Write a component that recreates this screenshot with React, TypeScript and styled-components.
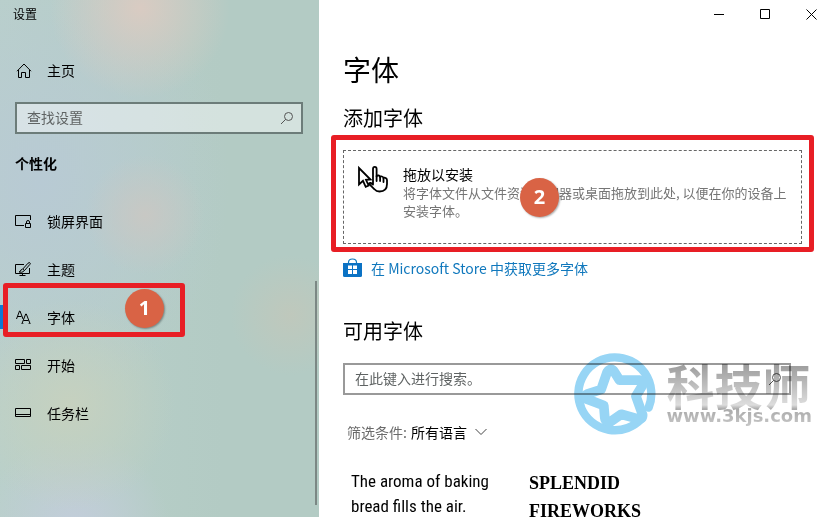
import React from "react";
import styled, { createGlobalStyle } from "styled-components";

const GlobalStyle = createGlobalStyle`
  *, *::before, *::after { box-sizing: border-box; }
  body {
    margin: 0;
    background: #fff;
    color: #000;
    font: 14px/20px "Noto Sans CJK SC", sans-serif;
  }
  h1, h2, p, ul { margin: 0; padding: 0; font-weight: 400; }
  button, input, select { font: inherit; color: inherit; }
`;

const Window = styled.div`
  display: flex;
  height: 100vh;
  overflow: hidden;
`;

const Sidebar = styled.aside`
  position: relative;
  flex: 0 0 319px;
  background:
    radial-gradient(circle at 140px 8px, #d9cbc2 0, #d9cbc200 90px),
    radial-gradient(circle at 145px 215px, #c8c8c4 0, #c8c8c400 60px),
    radial-gradient(circle at 70px 405px, #c6d1bf 0, #c6d1bf00 105px),
    radial-gradient(circle at 290px 315px, #bfc8bc 0, #bfc8bc00 60px),
    radial-gradient(circle at 75px 530px, #c3cddb 0, #c3cddb00 95px),
    radial-gradient(ellipse at 40px 180px, #b8cad4 0, #b8cad400 190px),
    linear-gradient(90deg, #b9d0ca, #b3cbc4 70%);
`;

const AppTitle = styled.div`
  padding: 4px 13px 5px;
  font-size: 12px;
`;

const NavItem = styled.a`
  position: relative;
  display: flex;
  align-items: center;
  gap: 15px;
  height: 48px;
  padding-left: 15px;
  color: #000;
  text-decoration: none;
`;

const HomeItem = styled(NavItem)`
  margin-top: 17px;
`;

const Indicator = styled.span`
  position: absolute;
  left: 0;
  top: 12px;
  width: 4px;
  height: 24px;
  background: #0f78d4;
`;

const SearchBox = styled.label<{ $tinted?: boolean }>`
  display: flex;
  align-items: center;
  height: 32px;
  margin: ${(p) => (p.$tinted ? "8px 16px 0 15px" : "0 11px 0 0")};
  padding: 0 7px 0 10px;
  border: 2px solid ${(p) => (p.$tinted ? "#6c7c79" : "#999")};
  background: ${(p) => (p.$tinted ? "#ffffff70" : "#fff")};
`;

const SearchInput = styled.input`
  flex: 1;
  min-width: 0;
  padding: 0 0 2px;
  border: 0;
  outline: 0;
  background: transparent;
  &::placeholder { color: #5f6363; opacity: 1; }
`;

const SectionLabel = styled.h2`
  padding: 19px 15px 24px;
  font-size: 14px;
  font-weight: 700;
`;

const NavList = styled.ul`
  list-style: none;
`;

const ScrollThumb = styled.div`
  position: absolute;
  right: 2px;
  top: 281px;
  bottom: 12px;
  width: 2px;
  background: #7b8784;
`;

const Frame = styled.span<{ $inset: string }>`
  position: absolute;
  inset: ${(p) => p.$inset};
  border: 5px solid #e81e25;
  border-radius: 3px;
  pointer-events: none;
`;

const Badge = styled.span<{ $left: string; $top: string }>`
  position: absolute;
  left: ${(p) => p.$left};
  top: ${(p) => p.$top};
  width: 39px;
  height: 39px;
  border-radius: 50%;
  background: #d96345;
  color: #fff;
  font: 700 20px/38px "Open Sans", sans-serif;
  text-align: center;
  box-shadow: 1px 1px 2px #0005;
`;

const Main = styled.main`
  display: flex;
  flex: 1;
  flex-direction: column;
  min-width: 0;
  overflow: hidden;
`;

const Caption = styled.div`
  display: flex;
  flex-shrink: 0;
  justify-content: flex-end;
  margin-right: -4px;
`;

const CaptionButton = styled.button`
  display: grid;
  place-items: center;
  width: 46px;
  height: 28px;
  padding: 0;
  border: 0;
  background: none;
`;

const Content = styled.div`
  padding: 21px 28px 0 24px;
`;

const PageTitle = styled.h1`
  font-size: 28px;
  line-height: 40px;
`;

const Heading = styled.h2`
  font-size: 20px;
  line-height: 28px;
`;

const AddHeading = styled(Heading)`
  margin: 15px 0 18px;
`;

const DropZone = styled.section`
  position: relative;
  display: flex;
  gap: 14px;
  min-height: 94px;
  padding: 14px 12px 22px 13px;
  border: 1px dashed #666;
`;

const DropText = styled.div`
  flex: 1;
  font-size: 13px;
  line-height: 18px;
  color: #757575;
`;

const DropTitle = styled.p`
  margin-bottom: 1px;
  font-size: 14px;
  color: #000;
`;

const StoreLink = styled.a`
  display: flex;
  align-items: center;
  gap: 9px;
  margin: 14px 0 39px;
  color: #1078bd;
  text-decoration: none;
`;

const FontSearch = styled.div`
  position: relative;
  margin-top: 18px;
`;

const Watermark = styled.div`
  position: absolute;
  right: -10px;
  top: -10px;
  display: flex;
  gap: 10px;
  mix-blend-mode: multiply;
  pointer-events: none;
`;

const Brand = styled.div`
  display: flex;
  flex-direction: column;
  padding-top: 9px;
  background: linear-gradient(#a0a0a0 14px, #ddd 52px, #aaa 56px, #ccc 76px);
  background-clip: text;
  color: transparent;
`;

const BrandName = styled.span`
  font-size: 48px;
  font-weight: 700;
  line-height: 44px;
`;

const BrandUrl = styled.span`
  font: 700 18px/20px "DejaVu Sans", sans-serif;
`;

const Filter = styled.label`
  display: flex;
  align-items: center;
  gap: 4px;
  margin: 27px 4px 0;
  color: #6b6b6b;
`;

const FilterSelect = styled.select`
  appearance: none;
  margin-right: 4px;
  padding: 0;
  border: 0;
  background: none;
  color: #000;
`;

const Samples = styled.div`
  display: grid;
  grid-template-columns: 178px 1fr;
  margin: 27px 8px 0;
`;

const NarrowSample = styled.p`
  font: 17px/25px "Roboto Condensed", "Liberation Sans Narrow", Roboto, sans-serif;
`;

const SerifSample = styled.p`
  font: 700 18px/28px "Liberation Serif", serif;
`;

const Icon = ({ children, w = 17, h = 17 }: { children: React.ReactNode; w?: number; h?: number }) => (
  <svg width={w} height={h} viewBox={`0 0 ${w} ${h}`} fill="none" stroke="#000" aria-hidden="true">
    {children}
  </svg>
);

const HomeIcon = () => (
  <Icon>
    <path d="M2 9.2 9 2l7 7.2M3.5 8v7.5h3v-5h4v5h4V8" />
  </Icon>
);
const LockScreenIcon = () => (
  <Icon>
    <path d="M9 12.5H.5v-10h15V7M10.500 10.500h5v4h-5zM11.500 10.500V9q0-1.500 1.500-1.500T14.500 9v1.500" />
  </Icon>
);
const ThemeIcon = () => (
  <Icon>
    <path d="M9 3.500H.5v9h14V7M4.500 14.500h6M7.500 12.500v2" />
    <path d="M14.500 1.500q1.500.500.300 2L9.500 9.500 7.800 8l5.200-5.800zM7.500 8.300q-2 .2-2.200 2L4 11q3 .8 4.500-.5.800-.700.700-1.300" />
  </Icon>
);
const FontsIcon = () => (
  <Icon>
    <path d="M1.500 10 4.500 2h.5l3 8M2.500 7.500h4M7 14.500 10.700 5h.6L15 14.500M8.500 11.500h5" />
    <path d="M6.500 14.500h2M13.500 14.500h2" strokeWidth=".6" />
  </Icon>
);
const StartIcon = () => (
  <Icon>
    <path d="M.5 2.500h9v4h-9zM11.500 2.500h4v4h-4zM.5 8.500h4v4h-4zM6.500 8.500h9v4h-9z" />
  </Icon>
);
const TaskbarIcon = () => (
  <Icon>
    <path d="M.5 3.500h15v8H.5zM.5 9.500h15" />
  </Icon>
);
const SearchIcon = () => (
  <svg width="14" height="14" viewBox="0 0 14 14" fill="none" stroke="#555" aria-hidden="true">
    <circle cx="8.500" cy="5.500" r="4" />
    <path d="M5.700 8.300 1 13" />
  </svg>
);

const CursorIcon = () => (
  <svg width="32" height="30" viewBox="0 0 32 30" fill="none" stroke="#000" strokeWidth="1.800" aria-hidden="true">
    <path d="M2 3v16.500l4-3.700 2.700 6 2.900-1.300-2.600-5.700 4.500-.3z" />
    <path
      strokeLinejoin="round"
      strokeLinecap="round"
      fill="#fff"
      d="M16 16V4q0-2.200 1.800-2.200T19.600 4v7.500q.4-1.300 2-1 1.300.3 1.500 1.500.5-1 2-.5 1.300.4 1.400 1.600.5-.8 1.800-.3 1.600.5 1.700 2.200v4q0 7.500-7.500 7.500-3.200 0-5-2.200L11.800 18.600q1.700-1.700 4.200 1z"
    />
    <path d="M19.600 11v5M23.100 12v4M26.500 13v4" strokeLinecap="round" />
  </svg>
);

const StoreIcon = () => (
  <svg width="19" height="20" viewBox="0 0 19 20" aria-hidden="true">
    <path d="M5.500 6V4.500q0-3.500 4-3.500t4 3.500V6" fill="none" stroke="#1078bd" strokeWidth="1.200" />
    <path d="M0 5h19v12.500q0 1.500-1.500 1.500h-16Q0 19 0 17.500z" fill="#0b72c4" />
    <path d="M5 7.500h4V11H5zM10 7.500h4V11h-4zM5 12h4v4H5zM10 12h4v4h-4z" fill="#fff" />
  </svg>
);

const StarLogo = () => (
  <svg width="82" height="82" viewBox="-1 -1 245 245" fill="none" stroke="#97d5f5" aria-hidden="true">
    <path
      d="M222 162A109 109 0 1 0 200.700 195.300"
      strokeWidth="25"
      strokeLinecap="round"
    />
    <path
      d="M98 56Q110 40 120 56L135 80 194 80Q212 82 203 97L184 128 204 184Q204 198 190 196L140 182 110 203Q93 208 91 192L88 156 36 136Q24 128 38 122L80 108Z"
      strokeWidth="29"
      strokeLinejoin="round"
    />
  </svg>
);

const navItems = [
  { label: "锁屏界面", icon: <LockScreenIcon /> },
  { label: "主题", icon: <ThemeIcon /> },
  { label: "字体", icon: <FontsIcon />, current: true },
  { label: "开始", icon: <StartIcon /> },
  { label: "任务栏", icon: <TaskbarIcon /> },
];

export default function App() {
  return (
    <>
      <GlobalStyle />
      <Window>
        <Sidebar>
          <AppTitle>设置</AppTitle>
          <HomeItem href="#home">
            <HomeIcon />
            主页
          </HomeItem>
          <SearchBox $tinted>
            <SearchInput type="text" placeholder="查找设置" aria-label="查找设置" />
            <SearchIcon />
          </SearchBox>
          <SectionLabel>个性化</SectionLabel>
          <NavList>
            {navItems.map((item) => (
              <li key={item.label}>
                <NavItem href={`#${item.label}`} aria-current={item.current ? "page" : undefined}>
                  {item.current && <Indicator />}
                  {item.icon}
                  {item.label}
                  {item.current && (
                    <>
                      <Frame $inset="-10px 134px 4px 3px" />
                      <Badge $left="125px" $top="-4px">1</Badge>
                    </>
                  )}
                </NavItem>
              </li>
            ))}
          </NavList>
          <ScrollThumb />
        </Sidebar>
        <Main>
          <Caption>
            <CaptionButton aria-label="最小化">
              <Icon w={11} h={11}><path d="M0 5.500h10" /></Icon>
            </CaptionButton>
            <CaptionButton aria-label="最大化">
              <Icon w={11} h={11}><path d="M.5.5h9v9h-9z" /></Icon>
            </CaptionButton>
            <CaptionButton aria-label="关闭">
              <Icon w={11} h={11}><path d="m.5.5 10 10M10.500.5l-10 10" /></Icon>
            </CaptionButton>
          </Caption>
          <Content>
            <PageTitle>字体</PageTitle>
            <AddHeading>添加字体</AddHeading>
            <DropZone>
              <CursorIcon />
              <DropText>
                <DropTitle>拖放以安装</DropTitle>
                <p>将字体文件从文件资源管理器或桌面拖放到此处, 以便在你的设备上安装字体。</p>
              </DropText>
              <Frame $inset="-16px -13px -9px -13px" />
              <Badge $left="176px" $top="27px">2</Badge>
            </DropZone>
            <StoreLink href="#store">
              <StoreIcon />
              在 Microsoft Store 中获取更多字体
            </StoreLink>
            <Heading>可用字体</Heading>
            <FontSearch>
              <SearchBox>
                <SearchInput type="text" placeholder="在此键入进行搜索。" aria-label="搜索字体" />
                <SearchIcon />
              </SearchBox>
              <Watermark>
                <StarLogo />
                <Brand>
                  <BrandName>科技师</BrandName>
                  <BrandUrl>www.3kjs.com</BrandUrl>
                </Brand>
              </Watermark>
            </FontSearch>
            <Filter>
              筛选条件:
              <FilterSelect defaultValue="all">
                <option value="all">所有语言</option>
              </FilterSelect>
              <svg width="12" height="8" viewBox="0 0 12 8" fill="none" stroke="#444" aria-hidden="true">
                <path d="m.5 1 5.500 5.500L11.500 1" />
              </svg>
            </Filter>
            <Samples>
              <NarrowSample>The aroma of baking<br />bread fills the air.</NarrowSample>
              <SerifSample>SPLENDID<br />FIREWORKS</SerifSample>
            </Samples>
          </Content>
        </Main>
      </Window>
    </>
  );
}
